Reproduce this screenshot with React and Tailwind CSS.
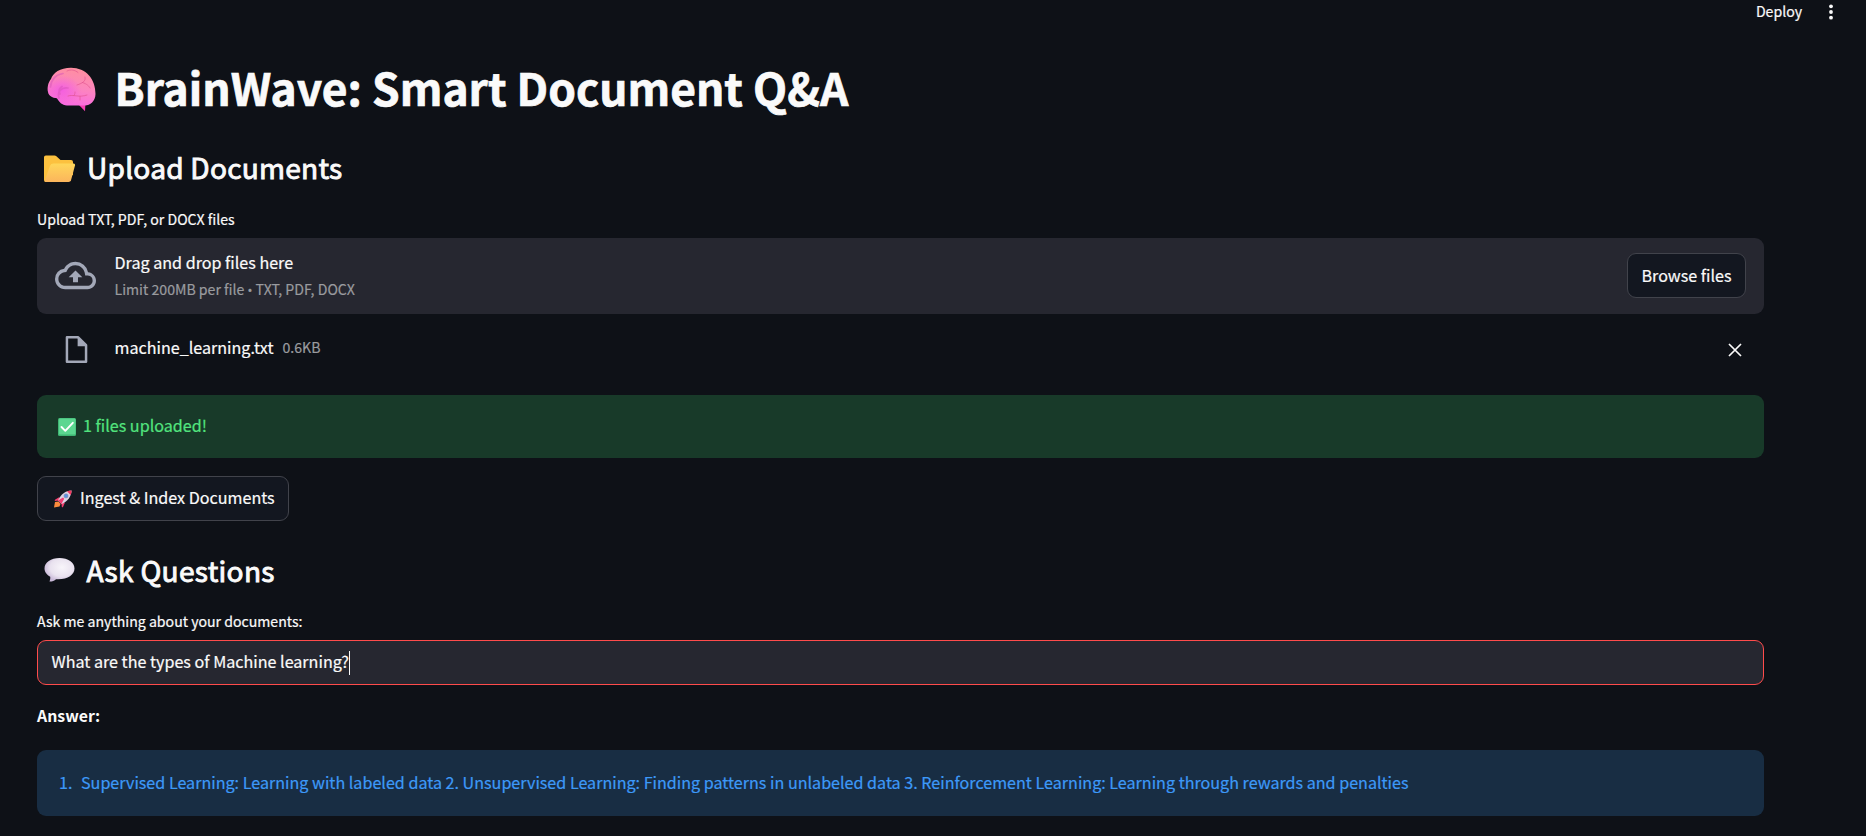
import React from "react";

function Brain() {
  return (
    <svg viewBox="0 0 49 45" className="mt-[5px] h-[45px] w-[49px] shrink-0">
      <defs>
        <linearGradient id="brain" x1="0.6" y1="0" x2="0.4" y2="1">
          <stop offset="0" stopColor="#ff8f9f" />
          <stop offset="0.5" stopColor="#fc86bd" />
          <stop offset="1" stopColor="#fa6ae2" />
        </linearGradient>
        <radialGradient id="lobe" cx=".3" cy=".6" r=".4">
          <stop offset="0" stopColor="#f45fe0" />
          <stop offset="1" stopColor="#f45fe0" stopOpacity="0" />
        </radialGradient>
      </defs>
      <path d="M30 36L38 44.300L38.500 36Z" fill="#f53fb4" />
      <path d="M24 .8C13 .8 6 6 4 12C.8 16 .2 21 1 25C1.800 29 6 31 10 31.200C12 34.500 15 38.500 20 38.500H38C43 38.500 48.500 34 48.500 27C48.500 12 39 .8 24 .8Z" fill="url(#brain)" />
      <path d="M24 .8C13 .8 6 6 4 12C.8 16 .2 21 1 25C1.800 29 6 31 10 31.200C12 34.500 15 38.500 20 38.500H38C43 38.500 48.500 34 48.500 27C48.500 12 39 .8 24 .8Z" fill="url(#lobe)" />
      <g fill="none" strokeLinecap="round">
        <path d="M3.500 20C4 13 8 8 16 6.500M12 31C10 25 14 20 21 21M15 19.500C12.500 21 11.500 24 13 27" stroke="#d955b8" strokeWidth="1.700" opacity=".55" />
        <path d="M20 4C24 2 28 3 31 5.500M38 10C39 14 36 16 30 18M35.500 15.500C40 17 42 19 43 21M21 29C26 27 32 31 40 28M27 28.500C28 27 28 26 28 25M33 29.500V33" stroke="#e0508c" strokeWidth="1" opacity=".6" />
      </g>
    </svg>
  );
}

function Folder() {
  return (
    <svg viewBox="0 0 32 28" className="mt-1 h-7 w-8 shrink-0">
      <defs>
        <linearGradient id="folder" x1="0" y1="0" x2="0" y2="1">
          <stop offset="0" stopColor="#ffd75a" />
          <stop offset="1" stopColor="#fbb55c" />
        </linearGradient>
      </defs>
      <path d="M0 2.200Q0 .4 1.800.4H10.500Q11.600.4 12.400 1.200L16.500 5H27Q29 5 29 7V20L3 27H1.500Q0 27 0 25Z" fill="#fcc13f" />
      <path d="M9.500 8.400H29.500Q31.500 8.400 31 10.400L27 25.200Q26.500 27 24.600 27H2Q.4 27 1 25L6 10.800Q6.900 8.400 9.500 8.400Z" fill="url(#folder)" />
    </svg>
  );
}

function Bubble() {
  return (
    <svg viewBox="0 0 31 24" className="h-6 w-[31px] shrink-0">
      <defs>
        <radialGradient id="bubble" cx=".58" cy=".4" r=".6">
          <stop offset="0" stopColor="#f8f5fa" />
          <stop offset=".65" stopColor="#e9e2ef" />
          <stop offset="1" stopColor="#c9b9d8" />
        </radialGradient>
      </defs>
      <path d="M15.500 0C7 0 .5 4.500 .5 10.500C.5 14 3 17 6.200 18.700C6.500 20.500 6 22 5.500 23.500C8 23.600 10.500 22.600 12 21.200C23 22 30.500 17 30.500 10.500C30.500 4.500 24 0 15.500 0Z" fill="url(#bubble)" />
    </svg>
  );
}

function Check() {
  return (
    <svg viewBox="0 0 18 18" className="h-[18px] w-[18px] shrink-0">
      <rect width="18" height="18" rx="1.500" fill="#3fb573" />
      <rect x="1" y="0.500" width="16.500" height="16" rx="1" fill="#5bd690" />
      <path d="M3.500 9L7.300 12.800L14.800 4.800" fill="none" stroke="#fff" strokeWidth="1.900" strokeLinecap="round" strokeLinejoin="round" />
    </svg>
  );
}

function Rocket() {
  return (
    <svg viewBox="0 0 18 18" className="h-[18px] w-[18px] shrink-0">
      <path d="M1 12L4.500 11.500L6.500 14L5.500 16.500L0 17.500Z" fill="#fb8b3c" />
      <path d="M5.500 7L1.300 9.500Q0.500 10 .8 11L5 10.500ZM11 12.500L9 17Q8.500 17.600 7.800 17L7.500 13Z" fill="#f43f6e" />
      <path d="M17.600.4C11.500.6 7 4 4 10.500L7.500 14C13.500 11.500 17.300 6.500 17.600.4Z" fill="#ddd3e4" />
      <path d="M17.600.4Q15 .4 13 1.200L16.600 5Q17.600 3 17.600.4Z" fill="#f4375f" />
      <path d="M4 10.500L9 7.500L10.200 8.700L7.500 14Z" fill="#f23d72" />
      <circle cx="12" cy="5.900" r="2.100" fill="#5b93e0" stroke="#8a8bb0" strokeWidth=".6" />
    </svg>
  );
}

export default function App() {
  return (
    <div className="flex h-[836px] w-full flex-col overflow-hidden bg-[#0e1117] font-['Noto_Sans_CJK_SC','Noto_Sans',sans-serif] text-[16.12px] text-[#fafafa] [-webkit-text-stroke-width:0.2px]">
      <header className="flex h-6 shrink-0 items-center justify-end pr-[33px] text-[14.11px]">
        <span className="pb-0.5 leading-[22px]">Deploy</span>
        <svg viewBox="0 0 4 16" className="mb-px ml-[27px] h-4 w-1 fill-current">
          <circle cx="2" cy="2.300" r="1.900" />
          <circle cx="2" cy="8" r="1.900" />
          <circle cx="2" cy="13.700" r="1.900" />
        </svg>
      </header>

      <main className="ml-[37px] flex w-[1727px] flex-col">
        <h1 className="mt-[34px] flex h-[58px] items-center gap-[19px] pl-[9.500px] text-[44.300px] leading-[58px] font-bold whitespace-nowrap [-webkit-text-stroke-width:0.7px]">
          <Brain />
          <span>BrainWave: Smart Document Q&amp;A</span>
        </h1>

        <h2 className="mt-[33px] flex h-9 items-center gap-[11px] pl-[7px] text-[28.100px] leading-9 font-normal tracking-[0.23px] whitespace-nowrap [-webkit-text-stroke-width:0.9px]">
          <Folder />
          <span className="pb-px">Upload Documents</span>
        </h2>
        <label className="mt-6 text-[14.110px] leading-5">
          <span>Upload TXT, PDF, or DOCX files</span>
        </label>
        <section className="mt-[9px] flex h-[76px] items-center rounded-[9px] bg-[#262730] pr-[18px] pb-0.5 pl-[18px]">
          <svg viewBox="0 0 24 24" className="h-[41px] w-[41px] shrink-0 fill-[#a3a8b8]">
            <path d="M19.350 10.040A7.490 7.490 0 0 0 12 4C9.110 4 6.600 5.640 5.350 8.040A5.994 5.994 0 0 0 0 14c0 3.310 2.690 6 6 6h13c2.760 0 5-2.240 5-5 0-2.640-2.050-4.780-4.650-4.960zM19 18H6c-2.210 0-4-1.790-4-4 0-2.050 1.530-3.760 3.560-3.970l1.070-.110.500-.950A5.469 5.469 0 0 1 12 6c2.620 0 4.880 1.860 5.390 4.430l.300 1.500 1.530.110A2.980 2.980 0 0 1 22 15c0 1.650-1.350 3-3 3zM8 13h2.550v3h2.900v-3H16l-4-4z" />
          </svg>
          <div className="ml-[18.500px] flex flex-1 flex-col gap-[3px]">
            <span className="leading-[26px]">Drag and drop files here</span>
            <span className="text-[14.110px] leading-[22px] text-[#9a9b9f]">
              Limit 200MB per file <span className="font-['Noto_Sans'] text-[13px]">•</span> TXT, PDF, DOCX
            </span>
          </div>
          <button className="h-[45px] w-[119px] rounded-[9px] border border-[#41434b] bg-[#131720] whitespace-nowrap">
            Browse files
          </button>
        </section>

        <div className="mt-[17px] flex h-[38px] items-center pr-[22px] pl-[26px]">
          <svg viewBox="0 0 24 24" className="mb-px h-[27px] w-[27px] shrink-0">
            <path d="M3.500 1.200H13.500L20.500 8.200V22.800H3.500Z" fill="none" stroke="#a3a8b8" strokeWidth="2.200" strokeLinejoin="round" />
            <path d="M13 1V9H21Z" fill="#a3a8b8" />
          </svg>
          <span className="ml-[24.500px] pb-[7px] leading-[26px]">machine_learning.txt</span>
          <span className="ml-[9px] pb-[6px] text-[14.110px] leading-[26px] text-[#9a9b9f]">0.6KB</span>
          <svg viewBox="0 0 14 14" className="ml-auto h-3.5 w-3.5">
            <path d="M1 1L13 13M13 1L1 13" stroke="currentColor" strokeWidth="1.700" />
          </svg>
        </div>

        <div className="mt-[26px] flex h-[63px] items-center gap-[7px] rounded-[9px] bg-[#183a29] pl-[21px] text-[#52e37e]">
          <Check />
          <span className="pb-[3px]">1 files uploaded!</span>
        </div>

        <button className="mt-[18px] flex h-[45px] w-[252px] items-center gap-[8px] rounded-[9px] border border-[#41434b] bg-[#131720] pl-[16px] whitespace-nowrap">
          <Rocket />
          <span className="pb-[3px]">Ingest &amp; Index Documents</span>
        </button>

        <h2 className="mt-[31px] flex h-9 items-center gap-[12px] pl-[6.500px] text-[28.100px] leading-9 font-normal tracking-[0.3px] whitespace-nowrap [-webkit-text-stroke-width:0.9px]">
          <Bubble />
          <span className="pb-px">Ask Questions</span>
        </h2>
        <label className="mt-[23px] text-[14.110px] leading-5">
          <span>Ask me anything about your documents:</span>
        </label>
        <div className="mt-[9px] flex h-[45px] items-center rounded-[9px] border border-[#ff4b4b] bg-[#262730] pl-[13.500px]">
          <span className="pb-[3px]">What are the types of Machine learning?</span>
          <span className="h-6 w-px bg-[#fafafa]" />
        </div>

        <p className="mt-[18px] text-[15.850px] leading-[26px] font-bold [-webkit-text-stroke-width:0px]">
          <span>Answer:</span>
        </p>
        <div className="mt-[21px] flex h-[66px] items-center rounded-[9px] bg-[#182d43] pb-0.5 pl-[22px] text-[#3d99f8]">
          <span className="w-[22px]">1.</span>
          <span className="whitespace-nowrap">
            Supervised Learning: Learning with labeled data 2. Unsupervised Learning: Finding patterns in unlabeled data 3. Reinforcement Learning: Learning through rewards and penalties
          </span>
        </div>
      </main>
    </div>
  );
}
